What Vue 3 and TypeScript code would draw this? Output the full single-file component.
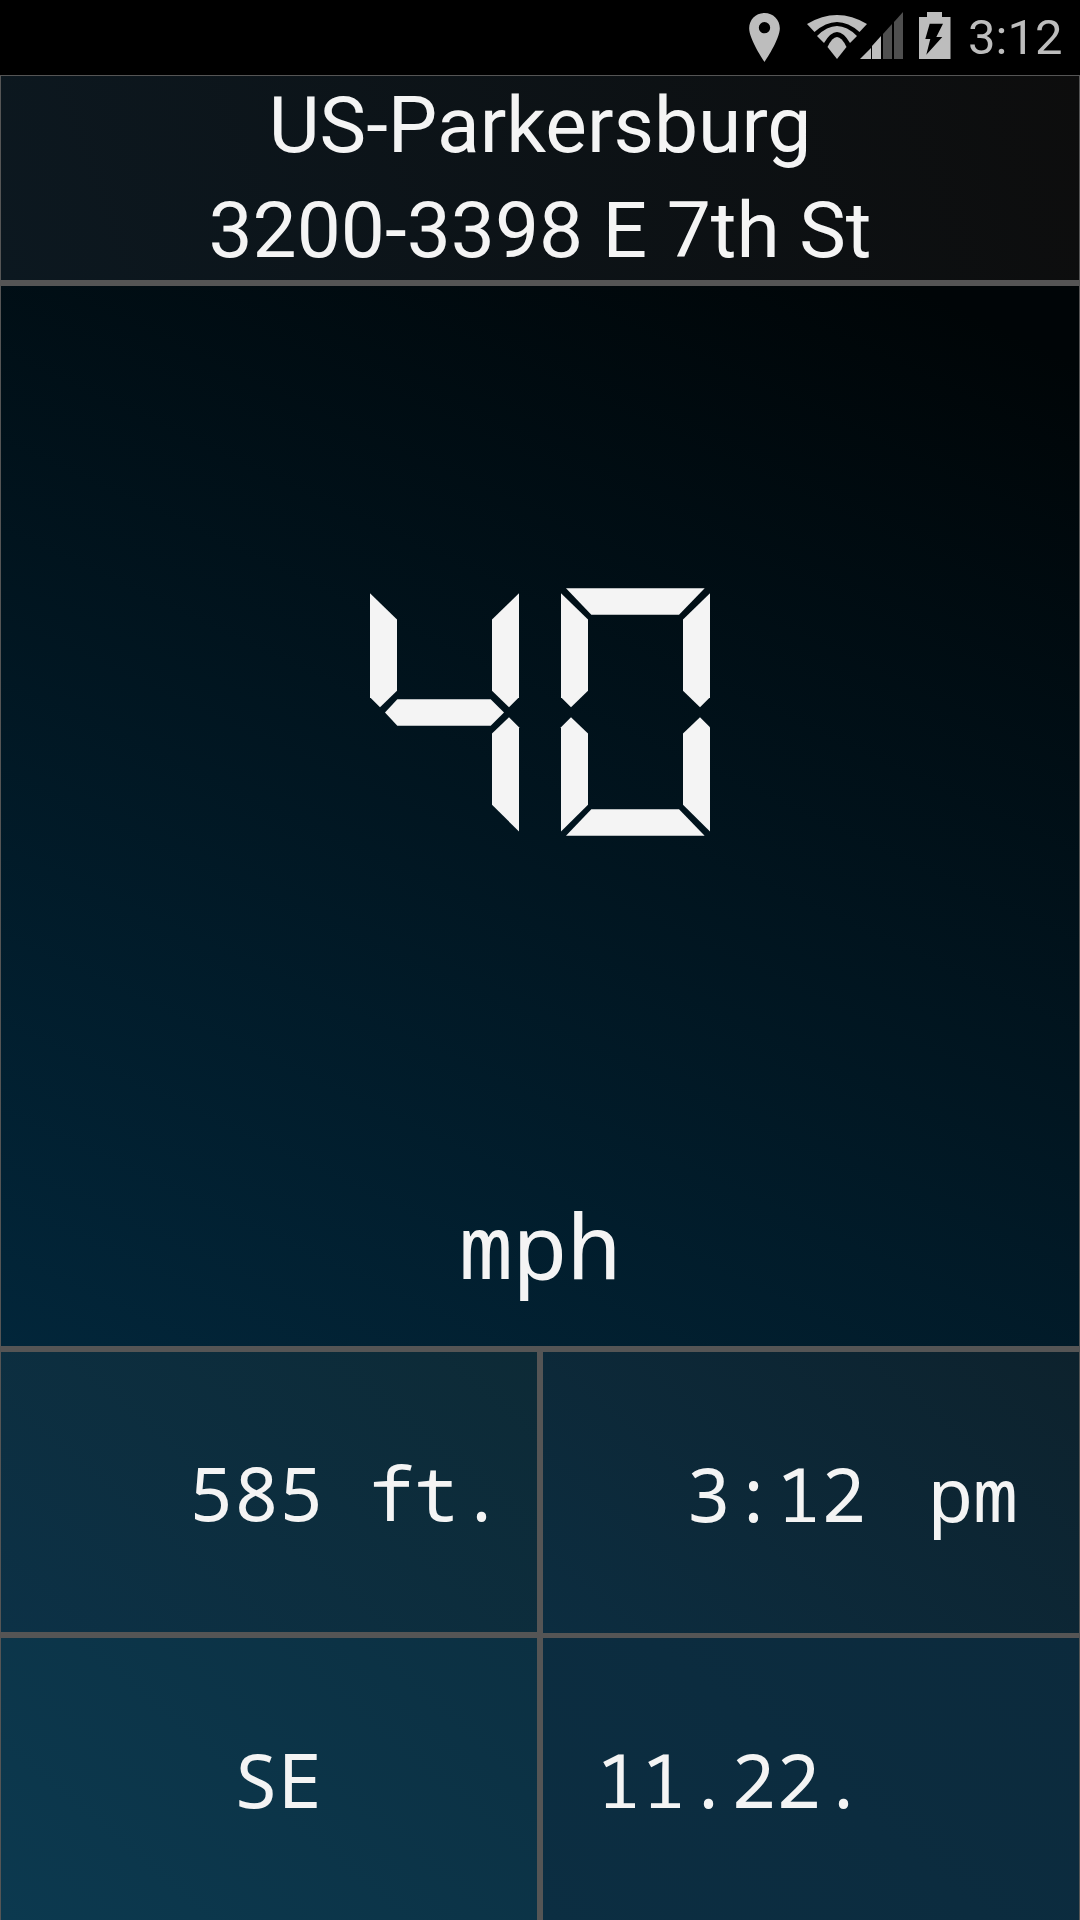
<script setup lang="ts">
type Seg = 'a' | 'b' | 'c' | 'd' | 'e' | 'f' | 'g'

const SEGMENTS: Record<Seg, string> = {
  a: '15,0 431,0 354,80 91,80',
  b: '447,15 447,327 417,357 366,308 366,94',
  c: '417,387 447,417 447,730 366,650 366,436',
  d: '91,663 354,663 431,743 15,743',
  e: '30,387 81,436 81,650 0,730 0,417',
  f: '0,15 81,94 81,308 30,357 0,327',
  g: '45,373 82,333 362,333 402,373 362,413 82,413'
}

const DIGIT_SEGMENTS: Record<string, Seg[]> = {
  '4': ['f', 'g', 'b', 'c'],
  '0': ['a', 'b', 'c', 'd', 'e', 'f']
}

const speed = '40'
const digits = speed.split('').map((char, index) => ({
  key: index,
  x: index === 0 ? 0 : 573,
  polys: DIGIT_SEGMENTS[char].map((seg) => SEGMENTS[seg])
}))
</script>

<template>
  <div class="screen">
    <header class="status">
      <svg class="pin" viewBox="88 38 92 147" aria-hidden="true">
        <path fill-rule="evenodd" d="M134 38C108 38 88 58 88 84C88 118 134 185 134 185C134 185 180 118 180 84C180 58 160 38 134 38ZM134 65A17 17 0 1 1 134 99A17 17 0 1 1 134 65Z" />
      </svg>
      <svg class="wifi" viewBox="0 0 60 44" aria-hidden="true">
        <path d="M0 9Q30 -9 60 9L52.500 17Q30 -3 7.500 17Z" />
        <path d="M10 21Q30 1 50 21L43 28Q30 6 17 28Z" />
        <path d="M20.500 32Q30 12 39.500 32L30 44Z" />
      </svg>
      <svg class="signal" viewBox="0 0 44 47" aria-hidden="true">
        <path d="M0 47L11 36V47Z" />
        <path d="M12 47V34L21 24V47Z" />
        <path class="dim" d="M23 47V22L32 12V47Z" />
        <path class="dim" d="M34 47V10L43 0V47Z" />
      </svg>
      <svg class="battery" viewBox="0 0 32 47" aria-hidden="true">
        <path fill-rule="evenodd" d="M8 0H23V5H31.500V47H0V5H8ZM10.700 11.700H24L17.300 25H23.300L7.300 42.700L11.300 27H6.300Z" />
      </svg>
      <span class="clock">3:12</span>
    </header>

    <div class="board">
      <section class="address">
        <div>US-Parkersburg</div>
        <div>3200-3398 E 7th St</div>
      </section>

      <section class="speed">
        <svg class="lcd" viewBox="0 0 1020 743" role="img" :aria-label="speed">
          <g v-for="digit in digits" :key="digit.key" :transform="`translate(${digit.x} 0)`">
            <polygon v-for="points in digit.polys" :key="points" :points="points" />
          </g>
        </svg>
        <div class="unit">mph</div>
      </section>

      <section class="stats">
        <div class="stat-col left">
          <div class="stat tall"><span class="alt">585 ft.</span></div>
          <div class="stat"><span class="dir">SE</span></div>
        </div>
        <div class="stat-col right">
          <div class="stat tall"><span class="time">3:12<span class="ampm">pm</span></span></div>
          <div class="stat"><span class="date">11.22.</span></div>
        </div>
      </section>
    </div>
  </div>
</template>

<style>
html,
body {
  margin: 0;
  background: #000;
}
</style>

<style scoped>
.screen {
  width: 1080px;
  height: 1920px;
  display: flex;
  flex-direction: column;
  background: #000;
  overflow: hidden;
}

.status {
  height: 75px;
  flex: none;
  box-sizing: border-box;
  display: flex;
  align-items: flex-start;
  padding-left: 749px;
  fill: #bdbdbd;
}

.pin {
  width: 31px;
  height: 49px;
  margin-top: 13px;
}

.wifi {
  width: 60px;
  height: 44px;
  margin: 15px 0 0 27px;
}

.signal {
  width: 44px;
  height: 47px;
  margin: 12px 0 0 -7px;
}

.signal .dim {
  fill: #4f4f4f;
}

.battery {
  width: 32px;
  height: 47px;
  margin: 12px 0 0 15px;
}

.clock {
  margin-left: 17px;
  font: 49px/75px Roboto, sans-serif;
  color: #bdbdbd;
}

.board {
  flex: 1;
  display: flex;
  flex-direction: column;
  gap: 6px;
  padding: 1px 1px 0;
  background: #555;
  color: #f4f4f4;
}

.address {
  height: 204px;
  box-sizing: border-box;
  display: flex;
  flex-direction: column;
  justify-content: center;
  text-align: center;
  font: 78.5px/105px Roboto, sans-serif;
  background: linear-gradient(70deg, #0c1820, #0d0d0d);
}

.speed {
  height: 1060px;
  box-sizing: border-box;
  display: flex;
  flex-direction: column;
  align-items: center;
  padding-top: 302px;
  background: linear-gradient(25deg, #02263a, #000507 95%);
  fill: #f4f4f4;
}

.lcd {
  width: 340px;
  height: 248px;
}

.unit {
  margin-top: 358px;
  font: 90px/100px "Noto Sans Mono", "DejaVu Sans Mono", monospace;
}

.stats {
  flex: 1;
  display: grid;
  grid-template-columns: 536px 536px;
  gap: 6px;
}

.stat-col {
  display: flex;
  flex-direction: column;
  height: 568px;
}

.left {
  gap: 6px;
}

.right {
  gap: 5px;
}

.stat {
  flex: 1;
  display: flex;
  align-items: center;
  font: 75px/100px "Noto Sans Mono", "DejaVu Sans Mono", monospace;
  white-space: pre;
}

.left .stat {
  background: linear-gradient(40deg, #0c394f, #0c3042);
}

.left .tall {
  flex: none;
  height: 280px;
  background: linear-gradient(40deg, #0c3146, #0d2a36);
}

.right .stat {
  background: linear-gradient(40deg, #0c2e42, #0c2a3c);
}

.right .tall {
  flex: none;
  height: 281px;
  background: linear-gradient(40deg, #0c2d40, #0d222d);
}

.alt {
  padding-left: 188px;
}

.dir {
  padding-left: 232px;
}

.time {
  padding-left: 143px;
}

.ampm {
  margin-left: 62px;
}

.date {
  padding-left: 53px;
}
</style>
